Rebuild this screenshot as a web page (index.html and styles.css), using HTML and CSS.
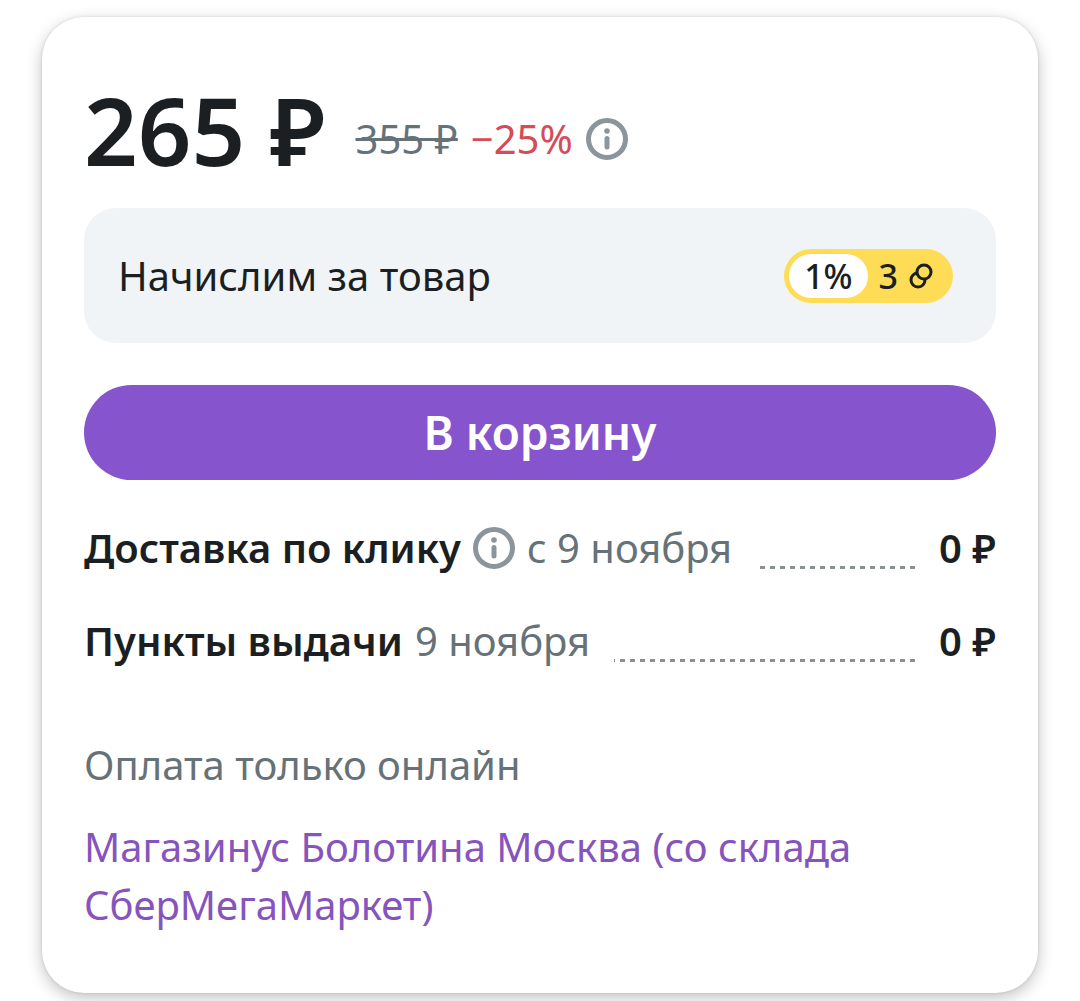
FILE: index.html
```html
<!DOCTYPE html>
<html lang="ru">
<head>
<meta charset="utf-8">
<meta name="viewport" content="width=device-width, initial-scale=1">
<title>Магазинус</title>
<link rel="stylesheet" href="styles.css">
</head>
<body>
<main class="card">
  <div class="price-row">
    <strong class="price">265 ₽</strong>
    <div class="price-details">
      <s class="old-price">355 ₽</s>
      <span class="discount">−25%</span>
      <button class="info" type="button" aria-label="О цене">
        <svg viewBox="0 0 42 42" aria-hidden="true"><circle cx="21" cy="21" r="18.5" fill="none" stroke="currentColor" stroke-width="5"/><circle cx="21" cy="13" r="2.8" fill="currentColor"/><path d="M21 20.500V29" stroke="currentColor" stroke-width="5" stroke-linecap="round"/></svg>
      </button>
    </div>
  </div>

  <section class="bonus">
    <span>Начислим за товар</span>
    <span class="badge">
      <span class="percent">1%</span>
      <span>3</span>
      <svg class="coins" viewBox="0 0 24 26" aria-hidden="true" stroke="currentColor" stroke-width="3"><circle cx="9" cy="17" r="7" fill="none"/><circle cx="15" cy="9" r="7" fill="#ffdc55"/></svg>
    </span>
  </section>

  <button class="buy" type="button">В корзину</button>

  <ul class="delivery">
    <li class="option">
      <strong>Доставка по клику</strong>
      <button class="info" type="button" aria-label="О доставке">
        <svg viewBox="0 0 42 42" aria-hidden="true"><circle cx="21" cy="21" r="18.5" fill="none" stroke="currentColor" stroke-width="5"/><circle cx="21" cy="13" r="2.8" fill="currentColor"/><path d="M21 20.500V29" stroke="currentColor" stroke-width="5" stroke-linecap="round"/></svg>
      </button>
      <span class="date">с 9 ноября</span>
      <span class="leader"></span>
      <strong>0 ₽</strong>
    </li>
    <li class="option">
      <strong>Пункты выдачи</strong>
      <span class="date">9 ноября</span>
      <span class="leader"></span>
      <strong>0 ₽</strong>
    </li>
  </ul>

  <p class="payment">Оплата только онлайн</p>
  <a class="seller" href="#">Магазинус Болотина Москва (со склада СберМегаМаркет)</a>
</main>
</body>
</html>
```
FILE: styles.css
```css
* {
  box-sizing: border-box;
}

body {
  margin: 0;
  padding: 17px 42px 8px;
  background: #fff;
  color: #1c1f22;
  font-family: "Noto Sans", sans-serif;
  font-size: 40px;
  line-height: 58px;
}

button {
  font: inherit;
  border: 0;
  cursor: pointer;
}

strong {
  font-weight: 600;
}

.card {
  padding: 42px 42px 59px;
  border-radius: 42px;
  background: #fff;
  box-shadow: 0 5px 16px rgba(0, 0, 0, 0.24), 0 0 3px rgba(0, 0, 0, 0.12);
}

.price-row {
  display: flex;
  align-items: center;
  gap: 30px;
  height: 149px;
  padding-bottom: 8px;
}

.price {
  font-size: 94px;
  line-height: 108px;
}

.price-details {
  display: flex;
  align-items: center;
  gap: 13px;
  padding-top: 18px;
}

.old-price,
.date,
.payment {
  color: #667278;
}

.old-price {
  text-decoration-thickness: 3px;
}

.discount {
  color: #d64b55;
}

.info {
  width: 42px;
  height: 42px;
  padding: 0;
  background: none;
  color: #8b959c;
}

.info svg {
  display: block;
}

.bonus {
  display: flex;
  align-items: center;
  justify-content: space-between;
  padding: 39px 43px 38px 34px;
  border-radius: 32px;
  background: #f0f4f7;
}

.badge {
  display: flex;
  align-items: center;
  gap: 11px;
  padding: 5px 20px 5px 5px;
  border-radius: 27px;
  background: #ffdc55;
  font-size: 34px;
  font-weight: 500;
  line-height: 44px;
}

.percent {
  padding: 0 15px;
  border-radius: 22px;
  background: #fff;
}

.coins {
  width: 24px;
  height: 26px;
}

.buy {
  display: block;
  width: 100%;
  margin-top: 42px;
  padding: 18px 42px 19px;
  border-radius: 48px;
  background: #8654cc;
  color: #fff;
  font-size: 46px;
  font-weight: 600;
}

.delivery {
  display: grid;
  gap: 35px;
  margin: 39px 0 0;
  padding: 0;
  list-style: none;
}

.option {
  display: flex;
  align-items: center;
  gap: 12px;
}

.leader {
  flex: 1;
  height: 3px;
  margin: 38px 12px 0;
  background: repeating-linear-gradient(270deg, #8b9093 0 5px, transparent 5px 10px);
}

.payment {
  margin: 66px 0 24px;
}

.seller {
  display: block;
  color: #8654bc;
  text-decoration: none;
}
```
